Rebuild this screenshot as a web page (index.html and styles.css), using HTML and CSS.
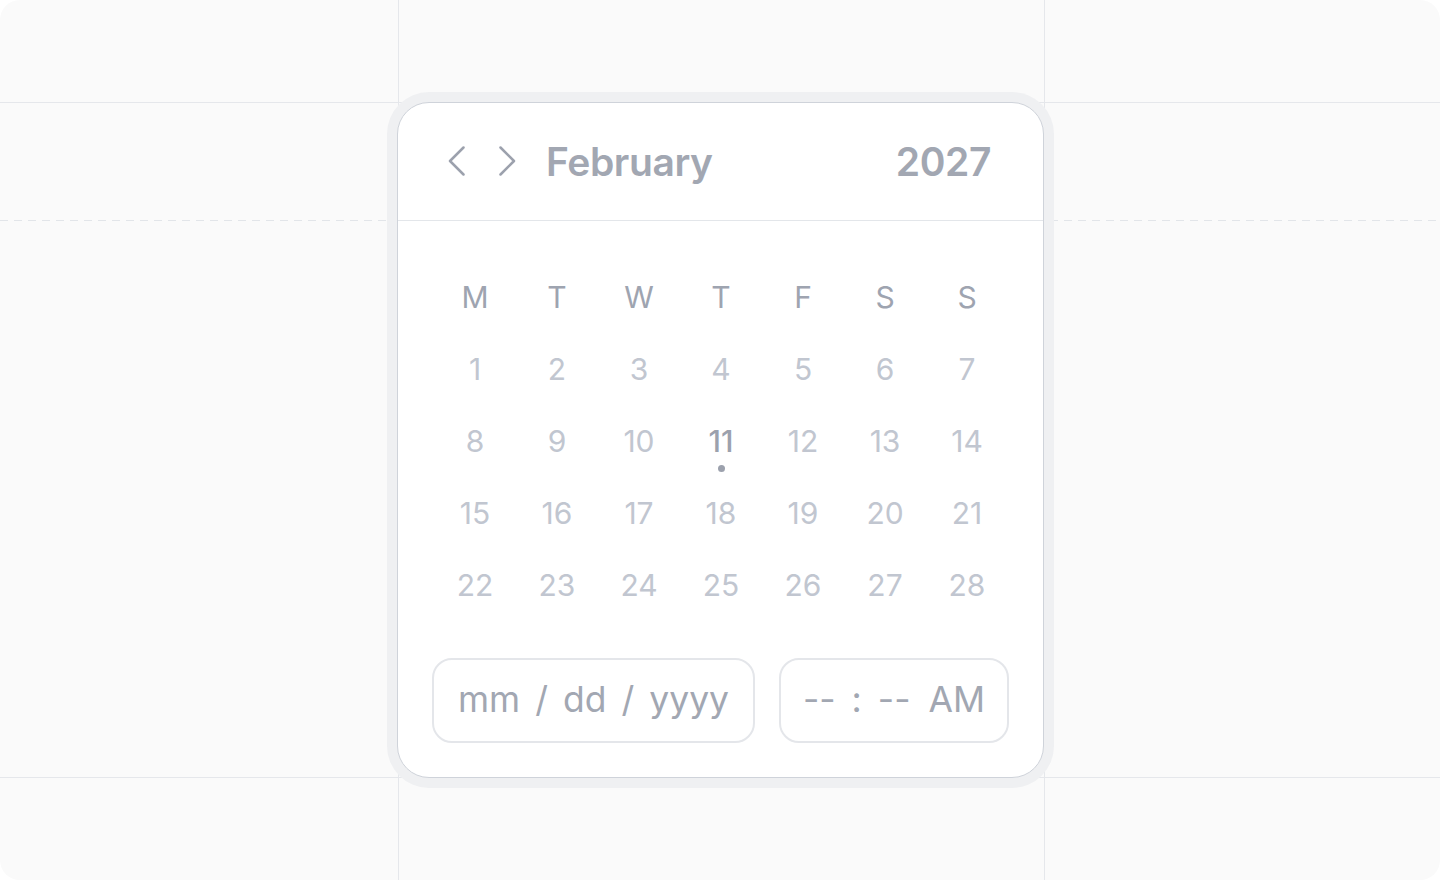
FILE: index.html
```html
<!DOCTYPE html>
<html lang="en">
<head>
  <meta charset="UTF-8" />
  <meta name="viewport" content="width=device-width, initial-scale=1.0"/>
  <title>Date Picker</title>
  <link rel="stylesheet" href="styles.css">
</head>
<body>
  <div class="stage">
    <!-- guide lines behind the picker -->
    <div class="guide guide-v guide-left"></div>
    <div class="guide guide-v guide-right"></div>
    <div class="guide guide-h guide-top"></div>
    <div class="guide guide-h guide-bottom"></div>
    <div class="guide guide-dash"></div>

    <div class="picker">
      <div class="picker-head">
        <button class="nav" aria-label="Previous month">
          <svg width="18" height="30" viewBox="0 0 18 30" fill="none" stroke="currentColor" stroke-width="2.5" stroke-linecap="round" stroke-linejoin="round">
            <polyline points="15.5,1.5 2,15 15.5,28.5" />
          </svg>
        </button>
        <button class="nav" aria-label="Next month">
          <svg width="18" height="30" viewBox="0 0 18 30" fill="none" stroke="currentColor" stroke-width="2.5" stroke-linecap="round" stroke-linejoin="round">
            <polyline points="2.5,1.5 16,15 2.5,28.5" />
          </svg>
        </button>
        <span class="month">February</span>
        <span class="year">2027</span>
      </div>

      <div class="picker-body">
        <div class="days">
          <span class="wd">M</span><span class="wd">T</span><span class="wd">W</span><span class="wd">T</span><span class="wd">F</span><span class="wd">S</span><span class="wd">S</span>
          <span>1</span><span>2</span><span>3</span><span>4</span><span>5</span><span>6</span><span>7</span>
          <span>8</span><span>9</span><span>10</span><span class="today">11</span><span>12</span><span>13</span><span>14</span>
          <span>15</span><span>16</span><span>17</span><span>18</span><span>19</span><span>20</span><span>21</span>
          <span>22</span><span>23</span><span>24</span><span>25</span><span>26</span><span>27</span><span>28</span>
        </div>

        <div class="fields">
          <div class="field field-date">
            <span>mm</span><span>/</span><span>dd</span><span>/</span><span>yyyy</span>
          </div>
          <div class="field field-time">
            <span>--</span><span>:</span><span>--</span><span class="ampm">AM</span>
          </div>
        </div>
      </div>
    </div>
  </div>
</body>
</html>
```

FILE: styles.css
```css
* { box-sizing: border-box; margin: 0; padding: 0; }
body {
  font-family: Inter, "Noto Sans", sans-serif;
  background: #fff;
  color: #9ca3af;
}
.stage {
  position: relative;
  width: 1440px;
  height: 880px;
  background: #fafafa;
  border-radius: 20px;
  overflow: hidden;
  display: flex;
  align-items: center;
  justify-content: center;
}

/* guide lines */
.guide {
  position: absolute;
  background: #e5e7eb;
}
.guide-v { top: 0; bottom: 0; width: 1px; }
.guide-left { left: 398px; }
.guide-right { left: 1044px; }
.guide-h { left: 0; right: 0; height: 1px; }
.guide-top { top: 102px; }
.guide-bottom { top: 777px; }
.guide-dash {
  left: 0; right: 0; top: 220px; height: 1px;
  background: repeating-linear-gradient(90deg, #e2e5e9 0 8px, transparent 8px 14px);
}

.picker {
  position: relative;
  width: 647px;
  height: 676px;
  background: #fff;
  border: 1px solid #cfd3da;
  border-radius: 32px;
  box-shadow: 0 0 0 10px #eff0f2;
  display: flex;
  flex-direction: column;
  margin: -1px 0 0 1px;
}
.picker-head {
  height: 118px;
  border-bottom: 1px solid #e3e6ea;
  display: flex;
  align-items: center;
  padding: 0 52px 0 50px;
}
.nav {
  background: none;
  border: none;
  color: #9ca1ad;
  display: flex;
  cursor: pointer;
}
.nav + .nav { margin-left: 32px; }
.month {
  margin-left: 30px;
  font-size: 39px;
  font-weight: 600;
  color: #a2a7b2;
  letter-spacing: -0.4px;
}
.year {
  margin-left: auto;
  font-size: 39px;
  font-weight: 600;
  color: #a2a7b2;
  letter-spacing: -0.4px;
}

.picker-body {
  flex: 1;
  padding: 40px 34px 34px;
  display: flex;
  flex-direction: column;
}
.days {
  display: grid;
  grid-template-columns: repeat(7, 82px);
  grid-auto-rows: 72px;
  margin-left: 2px;
  text-align: center;
  font-size: 30px;
  line-height: 72px;
  color: #c1c6d0;
}
.days .wd { color: #9ea4b0; }
.days .today {
  position: relative;
  color: #9ca1ad;
  font-weight: 500;
}
.days .today::after {
  content: "";
  position: absolute;
  left: 50%;
  top: 60px;
  width: 7px;
  height: 7px;
  margin-left: -3px;
  border-radius: 50%;
  background: #9ca1ad;
}

.fields {
  margin-top: auto;
  display: flex;
  gap: 24px;
}
.field {
  height: 85px;
  border: 2px solid #e4e6ea;
  border-radius: 20px;
  display: flex;
  align-items: center;
  justify-content: center;
  font-size: 35.5px;
  color: #a2a7b2;
  padding-bottom: 2px;
}
.field-date { width: 323px; gap: 15px; }
.field-time { flex: 1; gap: 16px; }
.field-time .ampm { margin-left: 2px; }
```
